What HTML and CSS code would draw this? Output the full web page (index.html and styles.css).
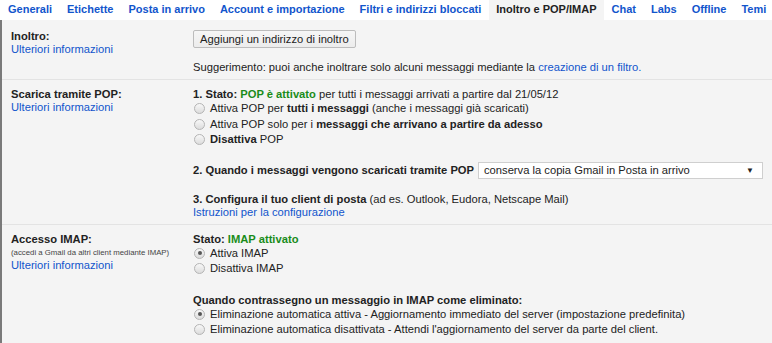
FILE: index.html
```html
<!DOCTYPE html>
<html lang="it">
<head>
<meta charset="utf-8">
<title>Impostazioni - Inoltro e POP/IMAP</title>
<link rel="stylesheet" href="styles.css">
</head>
<body>
<nav class="tabs">
  <a class="tab">Generali</a>
  <a class="tab">Etichette</a>
  <a class="tab">Posta in arrivo</a>
  <a class="tab">Account e importazione</a>
  <a class="tab">Filtri e indirizzi bloccati</a>
  <a class="tab active">Inoltro e POP/IMAP</a>
  <a class="tab">Chat</a>
  <a class="tab">Labs</a>
  <a class="tab">Offline</a>
  <a class="tab">Temi</a>
</nav>
<main class="content">
  <section class="row row-first">
    <div class="label">
      <div class="title">Inoltro:</div>
      <a class="link">Ulteriori informazioni</a>
    </div>
    <div class="body">
      <button class="btn">Aggiungi un indirizzo di inoltro</button>
      <div class="hint">Suggerimento: puoi anche inoltrare solo alcuni messaggi mediante la <a class="link">creazione di un filtro.</a></div>
    </div>
  </section>
  <section class="row">
    <div class="label">
      <div class="title">Scarica tramite POP:</div>
      <a class="link">Ulteriori informazioni</a>
    </div>
    <div class="body">
      <div class="line"><b>1. Stato: <span class="green">POP è attivato</span></b> per tutti i messaggi arrivati a partire dal 21/05/12</div>
      <div class="opt"><span class="radio"></span><span>Attiva POP per <b>tutti i messaggi</b> (anche i messaggi già scaricati)</span></div>
      <div class="opt"><span class="radio"></span><span>Attiva POP solo per i <b>messaggi che arrivano a partire da adesso</b></span></div>
      <div class="opt"><span class="radio"></span><span><b>Disattiva</b> POP</span></div>
      <div class="select-line"><b>2. Quando i messaggi vengono scaricati tramite POP</b>
        <div class="select"><span>conserva la copia Gmail in Posta in arrivo</span><span class="arrow">▼</span></div>
      </div>
      <div class="line gap-top"><b>3. Configura il tuo client di posta</b> (ad es. Outlook, Eudora, Netscape Mail)</div>
      <a class="link line">Istruzioni per la configurazione</a>
    </div>
  </section>
  <section class="row row-last">
    <div class="label">
      <div class="title">Accesso IMAP:</div>
      <div class="small">(accedi a Gmail da altri client mediante IMAP)</div>
      <a class="link">Ulteriori informazioni</a>
    </div>
    <div class="body">
      <div class="line"><b>Stato: <span class="green">IMAP attivato</span></b></div>
      <div class="opt opt-i"><span class="radio checked"></span><span>Attiva IMAP</span></div>
      <div class="opt opt-i"><span class="radio"></span><span>Disattiva IMAP</span></div>
      <div class="line gap-top2"><b>Quando contrassegno un messaggio in IMAP come eliminato:</b></div>
      <div class="opt opt-i"><span class="radio checked"></span><span>Eliminazione automatica attiva - Aggiornamento immediato del server (impostazione predefinita)</span></div>
      <div class="opt opt-i"><span class="radio"></span><span>Eliminazione automatica disattivata - Attendi l'aggiornamento del server da parte del client.</span></div>
    </div>
  </section>
</main>
</body>
</html>
```
FILE: styles.css
```css
html, body {
  margin: 0;
  padding: 0;
  background: #ffffff;
}
body {
  font-family: "Liberation Sans", Arial, sans-serif;
  font-size: 11.2px;
  color: #222222;
  line-height: 13px;
  overflow: hidden;
}
.tabs {
  display: flex;
  height: 20px;
  padding-left: 0.5px;
  background: #ffffff;
}
.tab {
  display: block;
  padding: 0 7.5px;
  font-size: 11px;
  font-weight: bold;
  line-height: 18px;
  color: #1155cc;
  white-space: nowrap;
}
.tab.active {
  background: #f4f4f4;
  color: #222222;
}
.content {
  background: #f4f4f4;
  border-left: 2px solid #7a7a7a;
  min-height: 330px;
}
.row {
  display: grid;
  grid-template-columns: 182px 1fr;
  padding: 8px 0 5px 9px;
  border-bottom: 1px solid #e3e3e3;
}
.row-first {
  padding-top: 10px;
}
.row-last {
  border-bottom: none;
}
.label .title {
  font-weight: bold;
}
.link {
  color: #1155cc;
  text-decoration: none;
  display: block;
}
.hint .link {
  display: inline;
}
.small {
  font-size: 7.8px;
  color: #444444;
  line-height: 13px;
}
.btn {
  display: block;
  height: 18px;
  padding: 0 6px;
  margin: 0;
  font-family: inherit;
  font-size: 11.2px;
  color: #222222;
  background: linear-gradient(#f6f6f6, #ececec);
  border: 1px solid #bcbcbc;
  border-radius: 2px;
}
.hint {
  margin-top: 13px;
}
.line {
  display: block;
}
.green {
  color: #1a8c1a;
}
.opt {
  display: flex;
  align-items: center;
  height: 15.5px;
}
.opt-i {
  height: 15px;
}
.radio {
  box-sizing: border-box;
  width: 11px;
  height: 11px;
  margin: 0 5px 0 1px;
  border: 1px solid #b4b4b4;
  border-radius: 50%;
  background: linear-gradient(#f8f8f8, #dcdcdc);
  display: flex;
  align-items: center;
  justify-content: center;
  flex: none;
}
.radio.checked::after {
  content: "";
  width: 4px;
  height: 4px;
  border-radius: 50%;
  background: #555555;
}
.select-line {
  display: flex;
  align-items: center;
  gap: 4px;
  margin-top: 14.5px;
  height: 17px;
}
.select {
  box-sizing: border-box;
  width: 285px;
  height: 17px;
  display: flex;
  align-items: center;
  justify-content: space-between;
  padding: 0 8px 0 5px;
  background: #ffffff;
  border: 1px solid #cfcfcf;
}
.arrow {
  font-size: 8px;
  color: #222222;
}
.gap-top {
  margin-top: 13.5px;
}
.gap-top2 {
  margin-top: 18px;
}
```
